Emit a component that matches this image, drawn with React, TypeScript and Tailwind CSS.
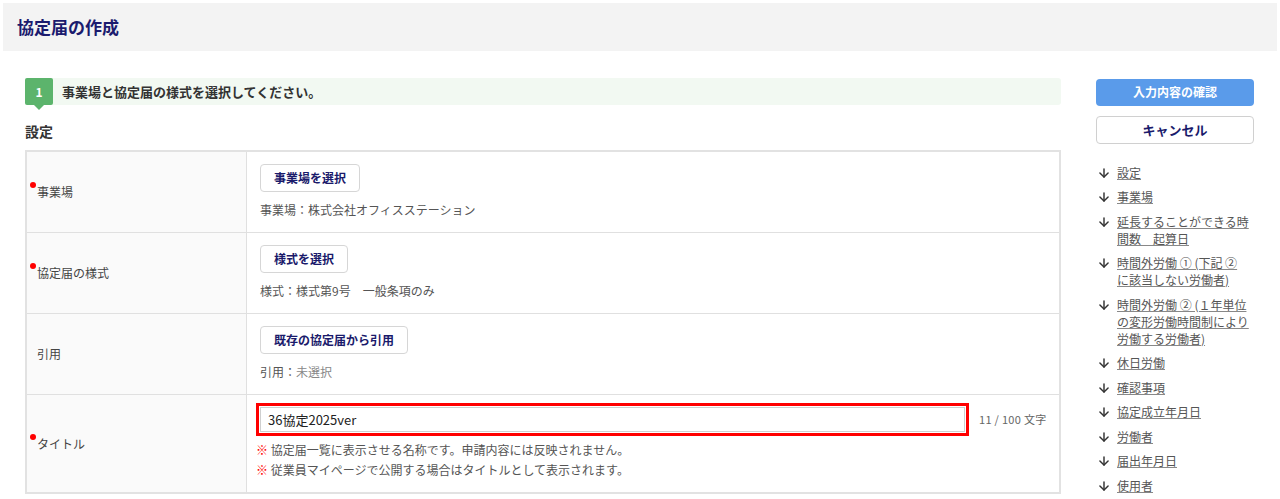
import { ArrowDown } from 'lucide-react';

const navItems = [
  '設定',
  '事業場',
  '延長することができる時間数　起算日',
  '時間外労働 ① (下記 ② に該当しない労働者)',
  '時間外労働 ② (１年単位の変形労働時間制により労働する労働者)',
  '休日労働',
  '確認事項',
  '協定成立年月日',
  '労働者',
  '届出年月日',
  '使用者',
];

function Label({ text, required }: { text: string; required?: boolean }) {
  return (
    <div className="w-[220px] shrink-0 bg-[#fafafa] border-r border-[#e0e0e0] flex items-center pl-[3px]">
      <span className="w-[7px] relative">
        {required && <span className="absolute -top-[10px] left-0 w-[6px] h-[6px] rounded-full bg-[#ff0000]" />}
      </span>
      <span className="text-[12px] text-[#444]">{text}</span>
    </div>
  );
}

function SelectButton({ children }: { children: React.ReactNode }) {
  return (
    <button className="h-[28px] px-[13px] border border-[#d6d6d6] rounded-[4px] bg-white text-[12px] font-bold text-[#1a1a6b]">
      {children}
    </button>
  );
}

export default function App() {
  return (
    <div className="p-[3px] bg-white min-h-[499px]" style={{ fontFamily: '"Noto Sans CJK JP", "Noto Sans", sans-serif' }}>
      <div className="h-[48px] bg-[#f3f3f3] flex items-center pl-[14px]">
        <h1 className="text-[17px] font-bold text-[#1b1b6e]">協定届の作成</h1>
      </div>

      <div className="flex pl-[22px] pt-[27px]">
        <div className="w-[1036px] shrink-0">
          <div className="h-[27px] bg-[#f2f9f2] rounded-[3px] flex items-center">
            <div className="relative w-[28px] h-[27px] bg-[#5cb46c] rounded-[2px] flex items-center justify-center text-white text-[12px] font-bold">
              1
              <span className="absolute left-[9px] -bottom-[5px] w-0 h-0 border-l-[5px] border-r-[5px] border-t-[5px] border-l-transparent border-r-transparent border-t-[#5cb46c]" />
            </div>
            <span className="ml-[9px] text-[13px] font-bold text-[#333]">事業場と協定届の様式を選択してください。</span>
          </div>

          <h2 className="mt-[16px] text-[14px] font-bold text-[#333] leading-[20px]">設定</h2>

          <div className="mt-[9px] border-2 border-[#e2e2e2]">
            <div className="flex h-[81px] border-b border-[#e0e0e0]">
              <Label text="事業場" required />
              <div className="pl-[13px] pt-[12px]">
                <SelectButton>事業場を選択</SelectButton>
                <p className="mt-[9px] text-[12px] text-[#555]">事業場：株式会社オフィスステーション</p>
              </div>
            </div>
            <div className="flex h-[81px] border-b border-[#e0e0e0]">
              <Label text="協定届の様式" required />
              <div className="pl-[13px] pt-[12px]">
                <SelectButton>様式を選択</SelectButton>
                <p className="mt-[9px] text-[12px] text-[#555]">様式：様式第9号　一般条項のみ</p>
              </div>
            </div>
            <div className="flex h-[81px] border-b border-[#e0e0e0]">
              <Label text="引用" />
              <div className="pl-[13px] pt-[12px]">
                <SelectButton>既存の協定届から引用</SelectButton>
                <p className="mt-[9px] text-[12px] text-[#555]">
                  引用：<span className="text-[#888]">未選択</span>
                </p>
              </div>
            </div>
            <div className="flex h-[97px]">
              <Label text="タイトル" required />
              <div className="flex-1 pl-[9px] pt-[8px]">
                <div className="flex items-center">
                  <div className="w-[713px] h-[33px] border-[3px] border-[#ff0000] p-[1px]">
                    <div className="h-full border border-[#cfcfcf] flex items-center pl-[7px] text-[13px] text-[#222]">
                      36協定2025ver
                    </div>
                  </div>
                  <span className="ml-[10px] text-[11px] text-[#666] tracking-[0.3px]">11 / 100 文字</span>
                </div>
                <p className="mt-[4px] text-[12px] text-[#555] leading-[20px]">
                  <span className="text-[#ff0000]">※</span> 協定届一覧に表示させる名称です。申請内容には反映されません。
                </p>
                <p className="text-[12px] text-[#555] leading-[20px]">
                  <span className="text-[#ff0000]">※</span> 従業員マイページで公開する場合はタイトルとして表示されます。
                </p>
              </div>
            </div>
          </div>
        </div>

        <aside className="ml-[35px] w-[158px] shrink-0">
          <button className="w-full h-[27px] rounded-[4px] bg-[#5a9bea] text-white text-[12px] font-bold">
            入力内容の確認
          </button>
          <button className="mt-[10px] w-full h-[28px] rounded-[4px] border border-[#d0d0d0] bg-white text-[13px] font-bold text-[#1a1a6b]">
            キャンセル
          </button>
          <ul className="mt-[20px] flex flex-col gap-[7.5px]">
            {navItems.map((item) => (
              <li key={item} className="flex items-start">
                <ArrowDown size={14} strokeWidth={2.5} className="mt-[2px] ml-[1px] text-[#333] shrink-0" />
                <a href="#" className="ml-[6px] w-[133px] text-[12px] leading-[17px] text-[#555] underline decoration-[#888]">
                  {item}
                </a>
              </li>
            ))}
          </ul>
        </aside>
      </div>
    </div>
  );
}
